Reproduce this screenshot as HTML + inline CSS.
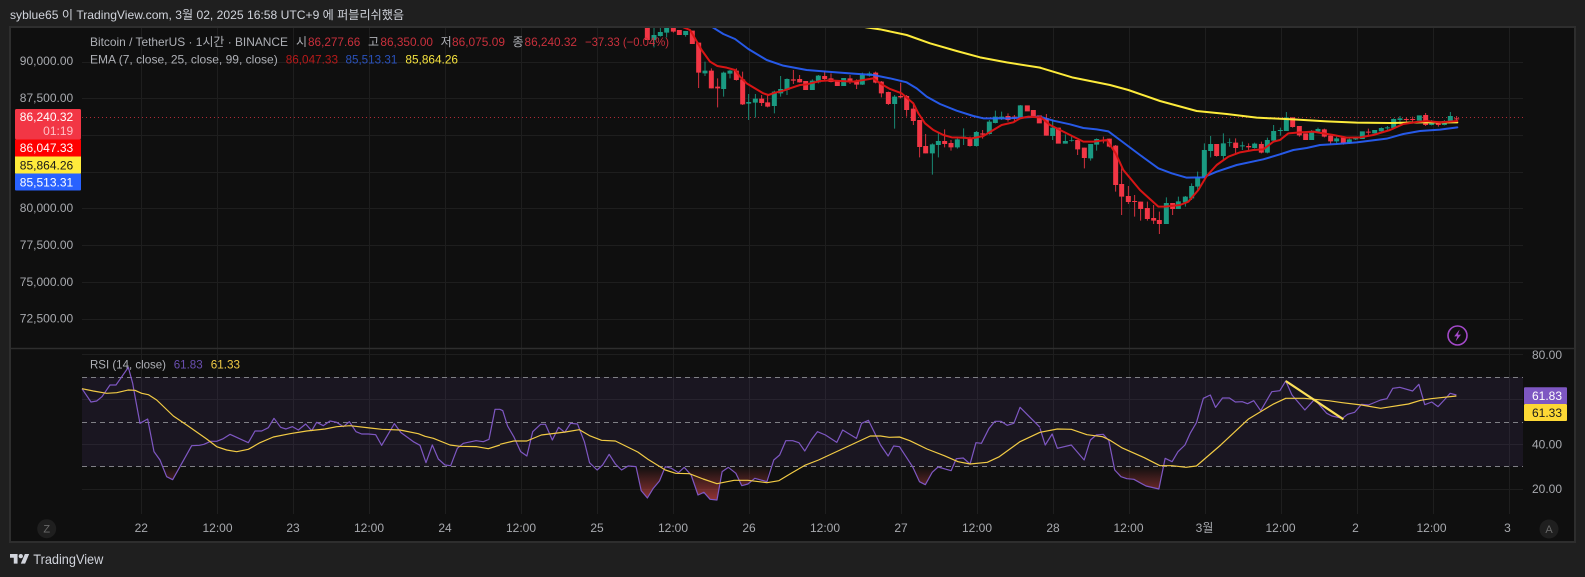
<!DOCTYPE html>
<html lang="ko">
<head>
<meta charset="utf-8">
<title>Bitcoin / TetherUS chart</title>
<style>
html,body{margin:0;padding:0;background:#1f1f1f;overflow:hidden}
svg{display:block}
text{font-family:"Liberation Sans","Noto Sans CJK KR",sans-serif;font-size:12px;fill:#aeb0b6}
.ax{text-anchor:middle;fill:#a8aaaf}
.pr{text-anchor:end;fill:#a8aaaf}
.red{fill:#c9303c}
</style>
</head>
<body>
<svg width="1585" height="577" viewBox="0 0 1585 577" xmlns="http://www.w3.org/2000/svg">
<defs>
<clipPath id="plot"><rect x="82" y="28" width="1441" height="320"/></clipPath>
<linearGradient id="os" gradientUnits="userSpaceOnUse" x1="0" y1="466" x2="0" y2="500">
<stop offset="0" stop-color="#ff5252" stop-opacity="0"/>
<stop offset="1" stop-color="#ff5252" stop-opacity=".55"/>
</linearGradient>
<linearGradient id="os5" gradientUnits="userSpaceOnUse" x1="0" y1="378" x2="0" y2="480">
<stop offset="0" stop-color="#ff5252" stop-opacity="0"/>
<stop offset="1" stop-color="#ff5252" stop-opacity=".55"/>
</linearGradient>
<linearGradient id="os6" gradientUnits="userSpaceOnUse" x1="0" y1="468" x2="0" y2="570">
<stop offset="0" stop-color="#ff5252" stop-opacity="0"/>
<stop offset="1" stop-color="#ff5252" stop-opacity=".55"/>
</linearGradient>
</defs>

<rect width="1585" height="577" fill="#1f1f1f"/>
<rect x="10" y="27" width="1565" height="515" fill="#0f0f0f" stroke="#2e2e2e" stroke-width="2"/>

<text x="10" y="19" textLength="394" lengthAdjust="spacingAndGlyphs" style="fill:#d1d4dc">syblue65 이 TradingView.com, 3월 02, 2025 16:58 UTC+9 에 퍼블리쉬했음</text>

<!-- grid -->
<g stroke="#1e1e1e" stroke-width="1" fill="none">
<path d="M82 62.5H1523M82 98.5H1523M82 135.5H1523M82 172.5H1523M82 208.5H1523M82 245.5H1523M82 282.5H1523M82 319.5H1523"/>
<path d="M82 354.5H1523M82 399.5H1523M82 444.5H1523M82 489.5H1523"/>
<path d="M141.5 28V514M217.5 28V514M293.5 28V514M369.5 28V514M445.5 28V514M521.5 28V514M597.5 28V514M673.5 28V514M749.5 28V514M825.5 28V514M901.5 28V514M977.5 28V514M1053.5 28V514M1129.5 28V514M1205.5 28V514M1281.5 28V514M1357.5 28V514M1433.5 28V514M1509.5 28V514"/>
</g>
<path d="M10 348.5H1575" stroke="#2e2e2e" stroke-width="1.5"/>

<!-- last price line -->
<path d="M82 117.5H1523" stroke="#f23645" stroke-width="1" stroke-dasharray="1 3" opacity=".7"/>

<!-- candles -->
<g clip-path="url(#plot)" fill="none">
<g transform="translate(640 20) scale(.33333)">
<path stroke="#1a9a82" stroke-width="2.6" d="M42 22V82M61 22V50M80 22V52M137 33V50M195 125V168M251 155V230M270 150V175M326 222V300M346 222V293M403 212V280M422 168V230M441 175V225M517 178V210M535 165V190M611 174V198M667 158V195M688 155V170M764 225V326M877 370V464M895 340V412M952 350V386M971 325V375M1009 333V380M1048 300V344M1066 272V310M1085 275V300M1141 255V295"/>
<path stroke="#1a9a82" stroke-width="15" d="M42 45V60M61 36V48M80 22V38M137 33V45M195 152V160M251 158V207M270 152V161M326 246V251M346 236V248M403 215V258M422 207V220M441 177V210M517 182V210M535 167V187M611 174V198M667 165V194M688 160V167M764 230V252M877 373V400M895 363V375M952 358V382M971 350V353M1009 336V378M1048 305V342M1066 290V309M1085 290V295M1141 256V292"/>
<path stroke="#f23645" stroke-width="2.6" d="M100 22V38M176 68V204M214 145V205M233 175V262M289 145V182M308 155V255M365 225V258M383 225V262M460 150V192M479 165V188M554 152V180M573 160V187M630 165V192M650 178V207M707 155V190M724 183V232M745 215V255M782 188V235M800 225V290M820 247V315M839 300V412M857 342V400M914 328V382M933 360V392M990 350V380M1028 330V356M1104 280V305M1123 285V305"/>
<path stroke="#f23645" stroke-width="15" d="M22 0V60M100 22V35M118 30V45M157 32V72M176 68V158M214 152V205M233 200V205M289 152V180M308 178V253M365 236V249M383 247V260M460 178V182M479 177V187M497 183V210M554 168V177M573 175V186M592 183V198M630 175V187M650 182V194M707 158V188M724 185V220M745 216V252M782 228V232M800 228V270M820 266V303M839 300V381M857 378V400M914 363V372M933 369V382M990 355V378M1028 340V344M1104 288V300M1123 290V296M1162 256V274M1180 270V290M1198 286V310"/>
</g>
<g transform="translate(1040 90) scale(.33333)">
<path stroke="#1a9a82" stroke-width="2.6" d="M38 88V150M76 133V161M95 135V155M152 162V212M170 145V182M379 322V402M415 320V357M436 318V350M455 280V330M473 245V305M493 160V265M512 138V202M550 130V210M569 145V170M607 155V180M644 158V176M682 143V190M701 105V155M721 113V137M739 66V123M815 120V150M834 113V127M890 140V160M928 145V162M947 140V150M1024 112V125M1042 108V120M1061 85V118M1080 78V103M1175 90V106M1213 90V106M1231 66V98"/>
<path stroke="#1a9a82" stroke-width="15" d="M38 113V138M76 153V161M95 151V153M152 162V205M170 147V164M379 339V402M415 334V357M436 320V337M455 288V325M473 262V290M493 180V262M512 162V183M550 160V198M569 156V158M607 166V169M644 161V174M682 150V188M701 123V152M721 120V123M739 82V123M815 123V150M834 117V125M890 145V154M928 148V160M947 143V148M967 124V147M1004 120V130M1024 114V124M1042 112V115M1061 87V114M1080 85V90M1138 76V92M1175 96V105M1213 93V105M1231 78V96"/>
<path stroke="#f23645" stroke-width="2.6" d="M19 72V137M113 150V195M133 173V235M190 140V160M208 146V172M227 165V305M245 228V375M265 288V342M284 315V380M302 335V392M322 335V392M341 345V402M358 365V432M398 339V375M530 162V200M587 145V190M626 160V182M664 155V190M758 82V113M778 108V140M853 116V142M872 137V162M910 140V164M985 116V137M1099 82V103M1118 80V100M1157 69V108M1195 95V110M1250 78V95"/>
<path stroke="#f23645" stroke-width="15" d="M19 85V137M55 113V161M113 150V178M133 173V204M190 151V154M208 146V170M227 167V285M245 282V320M265 318V336M284 333V336M302 335V357M322 354V387M341 384V392M358 390V402M398 339V357M530 162V198M587 158V174M626 168V172M664 162V188M758 82V111M778 108V136M797 130V150M853 118V140M872 137V154M910 143V160M985 125V128M1099 87V90M1118 87V90M1157 75V105M1195 97V105M1250 85V88"/>
</g>

<!-- EMA 99 yellow -->
<g stroke="#fdeb3b" stroke-width="6" stroke-linejoin="round" stroke-linecap="round">
<path transform="translate(640 20) scale(.33333)" d="M640 16L680 22L720 28L800 45L870 70L950 93L1020 112L1100 127L1200 143"/>
<path transform="translate(1040 90) scale(.33333)" d="M0 -67L96 -38L210 -15L265 0L360 33L470 63L560 72L650 83L760 88L860 94L950 98L1050 99L1140 97L1252 97"/>
</g>
<!-- EMA 25 blue -->
<g stroke="#2962ff" stroke-opacity=".9" stroke-width="6" stroke-linejoin="round" stroke-linecap="round">
<path transform="translate(640 20) scale(.33333)" d="M200 12L218 22L250 42L285 57L325 87L380 120L430 137L500 150L560 155L640 161L700 165L750 175L800 187L830 205L860 230L900 252L950 272L1000 288L1030 295L1100 295L1140 293L1200 290"/>
<path transform="translate(1040 90) scale(.33333)" d="M0 80L40 92L90 103L130 114L170 118L205 124L240 150L300 195L355 235L395 250L440 263L490 262L530 245L590 225L670 208L720 193L760 180L800 174L840 165L890 162L950 157L1040 146L1090 132L1140 123L1200 119L1252 112"/>
</g>
<!-- EMA 7 red -->
<g stroke="#d81515" stroke-width="6" stroke-linejoin="round" stroke-linecap="round">
<path transform="translate(640 20) scale(.33333)" d="M130 22L150 30L165 55L185 90L210 125L232 138L260 143L285 150L300 170L320 190L345 205L370 220L385 225L405 218L430 212L450 205L480 195L500 193L540 183L570 181L600 183L640 185L670 180L700 175L720 190L750 207L785 220L820 250L835 280L855 310L880 330L910 345L935 352L965 353L995 355L1030 348L1060 330L1085 315L1120 307L1140 295L1165 290L1198 292"/>
<path transform="translate(1040 90) scale(.33333)" d="M0 80L30 105L70 125L100 140L130 155L160 155L200 150L227 190L250 240L300 300L355 350L375 350L420 345L445 335L475 300L500 258L530 225L565 200L600 187L640 180L670 178L700 155L720 150L745 130L780 127L820 125L850 130L880 135L920 143L960 142L1000 135L1050 120L1090 102L1130 96L1160 93L1200 97L1252 93"/>
</g>
</g>

<!-- RSI pane -->
<rect x="82" y="377" width="1441" height="89.5" fill="#7e57c2" fill-opacity=".1"/>
<path d="M82 377.5H1523M82 422.5H1523M82 466.5H1523" stroke="#808086" stroke-width="1" stroke-dasharray="5 4" fill="none"/>

<!-- oversold fills -->
<path fill="url(#os)" d="M163.3 466.5L166.7 476.7L172.7 479.7L180 466.5Z"/>
<g fill="url(#os5)">
<path transform="translate(500 340) scale(.34439 .33333)" d="M397 379L410 452L428 474L445 445L463 423L478 379Z"/>
<path transform="translate(500 340) scale(.34439 .33333)" d="M540 379L555 405L575 465L592 457L610 478L630 480L645 395L663 382L685 400L702 437L720 432L740 415L775 425L782 379Z"/>
<path transform="translate(500 340) scale(.34439 .33333)" d="M1198 379L1218 425L1235 434L1255 397L1272 379Z"/>
</g>
<path fill="url(#os6)" transform="translate(1040 310) scale(.34758 .33333)" d="M205 469L215 480L233 500L250 506L270 508L305 528L342 537L355 469Z"/>

<g fill="none" stroke-linejoin="round">
<!-- RSI purple -->
<g stroke="#7e57c2" stroke-width="1.2">
<path transform="scale(.33333) translate(0 1020)" vector-effect="non-scaling-stroke" d="M246 146L273 186L290 183L306 170L330 135L348 135L385 82L398 130L407 180L420 250L443 237L462 335L480 360L500 410L518 419L575 317L598 316L612 313L632 304L650 304L668 297L690 283L745 308L765 273L785 273L805 263L822 235L842 262L858 267L877 260L895 270L917 252L935 272L950 247L970 257L990 243L1010 247L1030 260L1048 245L1068 275L1085 282L1105 282L1127 284L1145 316L1183 251L1203 278L1240 305L1260 316L1278 368L1297 315L1315 357L1335 375L1352 377L1372 325L1390 310L1428 302L1450 305L1467 298L1485 208L1500 208"/>
<path transform="translate(500 340) scale(.34439 .33333)" vector-effect="non-scaling-stroke" d="M0 208L8 212L22 258L40 290L60 335L78 348L95 275L118 253L132 253L152 300L170 262L188 277L205 250L225 252L245 305L260 368L282 390L298 375L317 343L335 372L353 390L372 378L395 380L410 452L428 474L445 445L463 423L480 380L498 385L518 398L535 382L555 405L575 465L592 457L610 478L630 480L645 395L663 382L685 400L702 437L720 432L740 415L775 425L795 360L812 345L830 302L850 302L868 308L885 333L905 298L922 275L945 285L978 307L995 270L1035 295L1050 250L1070 241L1105 315L1127 348L1143 318L1160 320L1198 380L1218 425L1235 434L1255 397L1272 381L1310 392L1325 356L1345 354L1365 372L1382 308L1398 310L1420 265L1437 244L1455 244L1473 256L1492 250L1510 202L1568 262"/>
<path transform="translate(1040 310) scale(.34758 .33333)" vector-effect="non-scaling-stroke" d="M0 355L15 405L35 372L50 415L90 405L127 450L145 390L162 375L182 373L198 392L215 480L233 500L250 506L270 508L305 528L342 537L360 445L380 455L397 425L417 405L432 370L450 338L470 265L490 255L505 292L525 264L545 264L562 276L582 275L597 281L615 272L635 302L667 245L690 242L707 213L725 255L762 300L790 268L825 310L840 318L870 325L885 313L905 307L925 283L945 285L980 270L998 266L1015 235L1035 232L1072 243L1090 223L1107 284L1127 276L1145 290L1163 270L1180 250L1198 255"/>
</g>
<!-- RSI MA yellow -->
<g stroke="#f2cb45" stroke-width="1.2">
<path transform="scale(.33333) translate(0 1020)" vector-effect="non-scaling-stroke" d="M246 146L280 153L320 160L350 158L385 150L405 151L425 160L445 164L470 180L520 228L560 255L620 297L650 320L680 330L710 335L745 328L780 308L820 291L870 281L920 273L975 267L1010 260L1050 257L1110 264L1145 268L1200 270L1255 281L1275 289L1300 295L1350 315L1380 319L1430 320L1465 326L1500 315"/>
<path transform="translate(500 340) scale(.34439 .33333)" vector-effect="non-scaling-stroke" d="M0 313L40 303L78 303L120 285L190 276L230 269L260 287L295 301L335 303L400 336L430 358L480 390L510 400L550 401L590 417L630 431L680 421L720 421L775 428L810 422L845 400L885 376L925 360L1075 288L1105 288L1130 292L1160 291L1190 302L1240 327L1290 347L1330 365L1365 372L1415 367L1450 350L1510 305L1568 277"/>
<path transform="translate(1040 310) scale(.34758 .33333)" vector-effect="non-scaling-stroke" d="M0 367L50 357L90 358L135 374L180 380L200 390L235 413L300 443L345 467L380 467L420 472L450 468L520 405L600 327L670 283L707 265L760 265L830 272L870 278L925 285L980 295L1010 290L1060 282L1095 271L1125 266L1198 258"/>
</g>
</g>
<path d="M1285.7 381L1343.4 419.3" stroke="#fbe05a" stroke-width="2.2" fill="none"/>

<!-- lightning icon -->
<circle cx="1457.5" cy="335.5" r="9.5" fill="none" stroke="#a349c9" stroke-width="1.6"/>
<path d="M1459.6 329.5L1454.2 336.4H1457.3L1455.6 341.4L1461 334.6H1457.9Z" fill="#a349c9"/>

<!-- legend -->
<text x="90" y="46" textLength="198" lengthAdjust="spacingAndGlyphs">Bitcoin / TetherUS · 1시간 · BINANCE</text>
<text x="296" y="46">시</text>
<text x="308" y="46" class="red" textLength="52.3" lengthAdjust="spacingAndGlyphs">86,277.66</text>
<text x="368" y="46">고</text>
<text x="380.4" y="46" class="red" textLength="52.6" lengthAdjust="spacingAndGlyphs">86,350.00</text>
<text x="440.6" y="46">저</text>
<text x="452" y="46" class="red" textLength="53" lengthAdjust="spacingAndGlyphs">86,075.09</text>
<text x="512.5" y="46">종</text>
<text x="524.5" y="46" class="red" textLength="52.5" lengthAdjust="spacingAndGlyphs">86,240.32</text>
<text x="585" y="46" class="red" textLength="84" lengthAdjust="spacingAndGlyphs">−37.33 (−0.04%)</text>
<text x="90" y="63.5" textLength="187.7" lengthAdjust="spacingAndGlyphs">EMA (7, close, 25, close, 99, close)</text>
<text x="285.7" y="63.5" style="fill:#b81a1a" textLength="52.3" lengthAdjust="spacingAndGlyphs">86,047.33</text>
<text x="345.5" y="63.5" style="fill:#2a52bd" textLength="51.8" lengthAdjust="spacingAndGlyphs">85,513.31</text>
<text x="405.4" y="63.5" style="fill:#f5e23e" textLength="52.6" lengthAdjust="spacingAndGlyphs">85,864.26</text>

<text x="90" y="368.5" textLength="76" lengthAdjust="spacingAndGlyphs">RSI (14, close)</text>
<text x="173.7" y="368.5" style="fill:#6a4fb0" textLength="29" lengthAdjust="spacingAndGlyphs">61.83</text>
<text x="210.7" y="368.5" style="fill:#f2cb45" textLength="29.3" lengthAdjust="spacingAndGlyphs">61.33</text>

<!-- left price axis -->
<g>
<text x="73.2" y="65" class="pr">90,000.00</text>
<text x="73.2" y="102" class="pr">87,500.00</text>
<text x="73.2" y="212" class="pr">80,000.00</text>
<text x="73.2" y="249" class="pr">77,500.00</text>
<text x="73.2" y="286" class="pr">75,000.00</text>
<text x="73.2" y="322.5" class="pr">72,500.00</text>
</g>
<rect x="15" y="109" width="66" height="30.5" rx="1.5" fill="#f23645"/>
<rect x="15" y="139.5" width="66" height="17" fill="#ff0000"/>
<rect x="15" y="156.5" width="66" height="17" fill="#ffeb3b"/>
<rect x="15" y="173.5" width="66" height="17" rx="1" fill="#2962ff"/>
<text x="73.2" y="121" text-anchor="end" style="fill:#fff">86,240.32</text>
<text x="73.2" y="135" text-anchor="end" style="fill:#ffc0c6">01:19</text>
<text x="73.2" y="152" text-anchor="end" style="fill:#fff">86,047.33</text>
<text x="73.2" y="169.3" text-anchor="end" style="fill:#1a1a1a">85,864.26</text>
<text x="73.2" y="186.3" text-anchor="end" style="fill:#fff">85,513.31</text>

<!-- right RSI axis -->
<text x="1547" y="359" class="ax">80.00</text>
<text x="1547" y="448.3" class="ax">40.00</text>
<text x="1547" y="493" class="ax">20.00</text>
<rect x="1524" y="387.3" width="43" height="17" rx="1" fill="#7e57c2"/>
<rect x="1524" y="404" width="43" height="17" rx="1" fill="#fdd835"/>
<text x="1547" y="400" text-anchor="middle" style="fill:#fff">61.83</text>
<text x="1547" y="417" text-anchor="middle" style="fill:#1a1a1a">61.33</text>

<!-- time axis -->
<g>
<text x="141.3" y="532" class="ax">22</text>
<text x="217.5" y="532" class="ax">12:00</text>
<text x="293" y="532" class="ax">23</text>
<text x="369" y="532" class="ax">12:00</text>
<text x="445" y="532" class="ax">24</text>
<text x="521" y="532" class="ax">12:00</text>
<text x="597" y="532" class="ax">25</text>
<text x="673" y="532" class="ax">12:00</text>
<text x="749" y="532" class="ax">26</text>
<text x="825" y="532" class="ax">12:00</text>
<text x="901" y="532" class="ax">27</text>
<text x="977" y="532" class="ax">12:00</text>
<text x="1053" y="532" class="ax">28</text>
<text x="1128.5" y="532" class="ax">12:00</text>
<text x="1204.5" y="532" class="ax">3월</text>
<text x="1280.5" y="532" class="ax">12:00</text>
<text x="1355.5" y="532" class="ax">2</text>
<text x="1431.5" y="532" class="ax">12:00</text>
<text x="1507.5" y="532" class="ax">3</text>
</g>

<!-- Z / A buttons -->
<circle cx="46.7" cy="528.7" r="9.5" fill="#1f1f1f"/>
<text x="46.7" y="532.7" text-anchor="middle" style="fill:#6a6a6a;font-size:11px">Z</text>
<circle cx="1549" cy="529" r="9.5" fill="#1f1f1f"/>
<text x="1549" y="533" text-anchor="middle" style="fill:#6a6a6a;font-size:11px">A</text>

<!-- footer logo -->
<g transform="translate(10 551.8) scale(.54)" fill="#d1d4dc">
<path d="M14 22H7V11H0V4h14v18zM28 22h-8l7.5-18h8L28 22z"/>
<circle cx="20" cy="8" r="4"/>
</g>
<text x="33.3" y="564" textLength="70" lengthAdjust="spacingAndGlyphs" style="font-size:14px;fill:#d1d4dc">TradingView</text>
</svg>
</body>
</html>
